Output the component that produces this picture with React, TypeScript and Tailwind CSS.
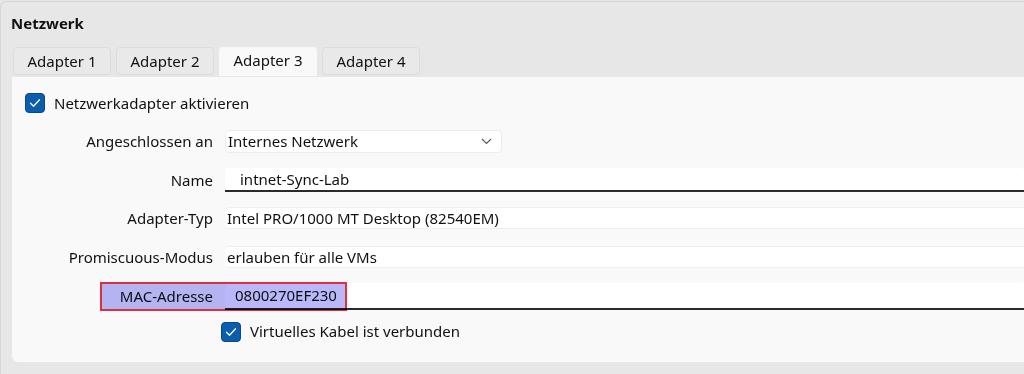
import React from "react";

function Check() {
  return (
    <span className="flex h-[20px] w-[20px] shrink-0 items-center justify-center rounded-[4px] border border-[#0d4680] bg-[#0b5dad]">
      <svg width="12" height="10" viewBox="0 0 12 10" fill="none">
        <polyline points="1.5,5.2 4.5,8.2 10.5,1.8" stroke="#ffffff" strokeWidth="1.3" strokeLinecap="round" strokeLinejoin="round" />
      </svg>
    </span>
  );
}

const tabs = ["Adapter 1", "Adapter 2", "Adapter 3", "Adapter 4"];

export default function App() {
  return (
    <div className="h-[374px] w-[1024px] overflow-hidden bg-[#e6e6e6] font-['Noto_Sans',sans-serif] text-[15px] text-[#111111]">
      <div className="mt-[1px] h-[373px] rounded-tl-[6px] border-l border-t border-[#d6d6d6] bg-[#e7e7e7]">
        <div className="pl-[10px] pt-[11px] text-[15px] font-bold leading-[20px]">Netzwerk</div>

        {/* tab strip */}
        <div className="mt-[14px] flex gap-[5px] pl-[12px]">
          {tabs.map((t, i) => (
            <div
              key={t}
              className={
                i === 2
                  ? "flex h-[29px] w-[98px] items-center justify-center rounded-t-[4px] bg-[#f9f9f9] pb-[2px] leading-none"
                  : "flex h-[28px] w-[98px] items-center justify-center rounded-[4px] border border-[#dcdcdc] bg-[#e9e9e9] leading-none"
              }
            >
              {t}
            </div>
          ))}
        </div>

        {/* panel */}
        <div className="ml-[11px] mt-[1px] h-[285px] rounded-bl-[6px] bg-[#f9f9f9] pt-[16px]">
          <div className="flex h-[20px] items-center gap-[9px] pl-[13px]">
            <Check />
            <span>Netzwerkadapter aktivieren</span>
          </div>

          <div className="mt-[17px] grid grid-cols-[201px_1fr] items-center gap-x-[12px]">
            <div className="text-right">Angeschlossen an</div>
            <div className="flex h-[23px] w-[277px] items-center justify-between rounded-[4px] border border-[#ececec] bg-white pl-[2px] pr-[9px]">
              <span>Internes Netzwerk</span>
              <svg width="11" height="7" viewBox="0 0 11 7" fill="none">
                <polyline points="1,1 5.5,5.5 10,1" stroke="#5a5a5a" strokeWidth="1.2" />
              </svg>
            </div>
          </div>

          <div className="mt-[15px] grid grid-cols-[201px_1fr] items-center gap-x-[12px]">
            <div className="text-right">Name</div>
            <div className="flex h-[24px] items-center rounded-t-[4px] border-b-2 border-[#2a2a2a] bg-white pl-[15px]">
              intnet-Sync-Lab
            </div>
          </div>

          <div className="mt-[15px] grid grid-cols-[201px_1fr] items-center gap-x-[12px]">
            <div className="text-right">Adapter-Typ</div>
            <div className="flex h-[22px] items-center rounded-l-[4px] border-y border-[#efefef] bg-white pl-[2px]">
              Intel PRO/1000 MT Desktop (82540EM)
            </div>
          </div>

          <div className="mt-[16px] grid grid-cols-[201px_1fr] items-center gap-x-[12px]">
            <div className="text-right">Promiscuous-Modus</div>
            <div className="flex h-[22px] items-center rounded-l-[4px] border-y border-[#efefef] bg-white pl-[2px]">
              erlauben für alle VMs
            </div>
          </div>

          <div className="relative mt-[15px] grid grid-cols-[201px_1fr] items-center gap-x-[12px]">
            <div className="text-right">MAC-Adresse</div>
            <div className="flex h-[27px] items-center rounded-t-[4px] border-b-2 border-[#2a2a2a] bg-white pl-[10px]">
              0800270EF230
            </div>
            <div className="pointer-events-none absolute left-[88px] top-[-1px] h-[29px] w-[247px] border-2 border-[#e4303f] bg-[#b9b9f9] mix-blend-multiply" />
          </div>

          <div className="ml-[209px] mt-[11px] flex h-[21px] items-center gap-[9px]">
            <Check />
            <span>Virtuelles Kabel ist verbunden</span>
          </div>
        </div>
      </div>
    </div>
  );
}
